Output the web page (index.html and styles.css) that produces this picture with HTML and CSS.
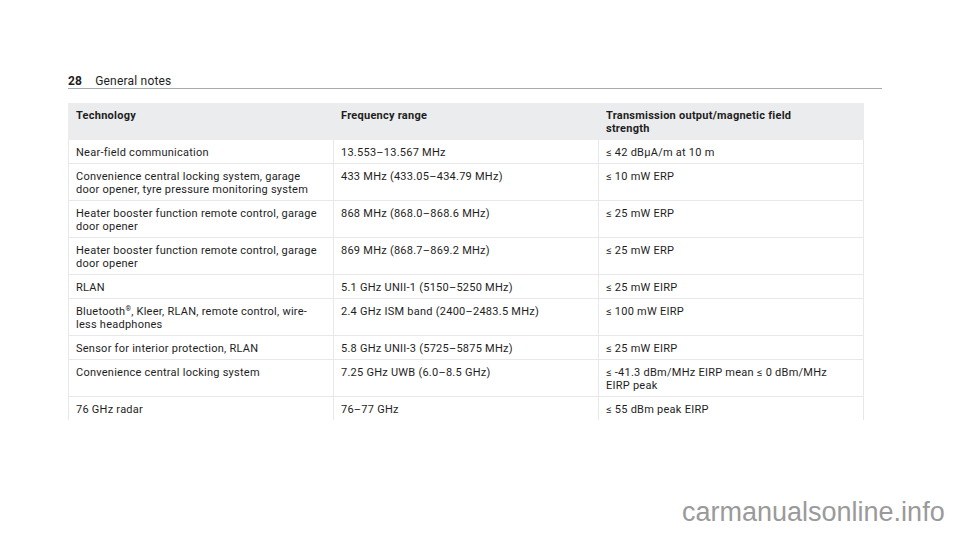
FILE: index.html
```html
<!DOCTYPE html>
<html>
<head>
<meta charset="utf-8">
<link rel="stylesheet" href="styles.css">
</head>
<body>
<div class="page">
  <header class="running-head">
    <span class="page-no">28</span>
    <span class="section">General notes</span>
  </header>
  <table class="spec">
    <thead>
      <tr>
        <th>Technology</th>
        <th>Frequency range</th>
        <th>Transmission output/magnetic field<br>strength</th>
      </tr>
    </thead>
    <tbody>
      <tr>
        <td>Near-field communication</td>
        <td>13.553–13.567 MHz</td>
        <td>≤ 42 dBµA/m at 10 m</td>
      </tr>
      <tr>
        <td>Convenience central locking system, garage<br>door opener, tyre pressure monitoring system</td>
        <td>433 MHz (433.05–434.79 MHz)</td>
        <td>≤ 10 mW ERP</td>
      </tr>
      <tr>
        <td>Heater booster function remote control, garage<br>door opener</td>
        <td>868 MHz (868.0–868.6 MHz)</td>
        <td>≤ 25 mW ERP</td>
      </tr>
      <tr>
        <td>Heater booster function remote control, garage<br>door opener</td>
        <td>869 MHz (868.7–869.2 MHz)</td>
        <td>≤ 25 mW ERP</td>
      </tr>
      <tr>
        <td>RLAN</td>
        <td>5.1 GHz UNII-1 (5150–5250 MHz)</td>
        <td>≤ 25 mW EIRP</td>
      </tr>
      <tr>
        <td>Bluetooth<sup>®</sup>, Kleer, RLAN, remote control, wire-<br>less headphones</td>
        <td>2.4 GHz ISM band (2400–2483.5 MHz)</td>
        <td>≤ 100 mW EIRP</td>
      </tr>
      <tr>
        <td>Sensor for interior protection, RLAN</td>
        <td>5.8 GHz UNII-3 (5725–5875 MHz)</td>
        <td>≤ 25 mW EIRP</td>
      </tr>
      <tr>
        <td>Convenience central locking system</td>
        <td>7.25 GHz UWB (6.0–8.5 GHz)</td>
        <td>≤ -41.3 dBm/MHz EIRP mean ≤ 0 dBm/MHz<br>EIRP peak</td>
      </tr>
      <tr class="last">
        <td>76 GHz radar</td>
        <td>76–77 GHz</td>
        <td>≤ 55 dBm peak EIRP</td>
      </tr>
    </tbody>
  </table>
  <div class="watermark">carmanualsonline.info</div>
</div>
</body>
</html>
```

FILE: styles.css
```css
html, body {
  margin: 0;
  padding: 0;
  background: #ffffff;
}
.page {
  width: 960px;
  height: 533px;
  position: relative;
  overflow: hidden;
  font-family: Roboto, "Liberation Sans", sans-serif;
  color: #1e1e1e;
}
.running-head {
  margin: 0 78px 0 68px;
  padding-top: 75px;
  height: 13px;
  border-bottom: 1px solid #a3ada9;
  font-size: 12px;
  line-height: 13px;
  letter-spacing: 0.2px;
  display: flex;
  gap: 13px;
}
.page-no {
  font-weight: 700;
}
.spec {
  margin: 14px 0 0 68px;
  width: 796px;
  border-collapse: collapse;
  table-layout: fixed;
  font-size: 11px;
  letter-spacing: 0.25px;
  line-height: 13px;
}
.spec th,
.spec td {
  text-align: left;
  vertical-align: top;
  padding: 6px 7px 4px 7px;
  border-left: 1px solid #e8e8e8;
  border-right: 1px solid #e8e8e8;
}
.spec th {
  background: #ebeced;
  font-weight: 700;
  border-color: #ebeced;
  padding-bottom: 5px;
}
.spec td {
  border-bottom: 1px solid #e8e8e8;
}
.spec tr.last td {
  border-bottom: none;
}
.spec sup {
  font-size: 7px;
  line-height: 0;
  vertical-align: 4px;
}
.watermark {
  position: absolute;
  left: 682px;
  top: 499px;
  font-family: "Liberation Sans", Arial, sans-serif;
  font-size: 27px;
  line-height: 27px;
  color: #9a9a9a;
}
```
